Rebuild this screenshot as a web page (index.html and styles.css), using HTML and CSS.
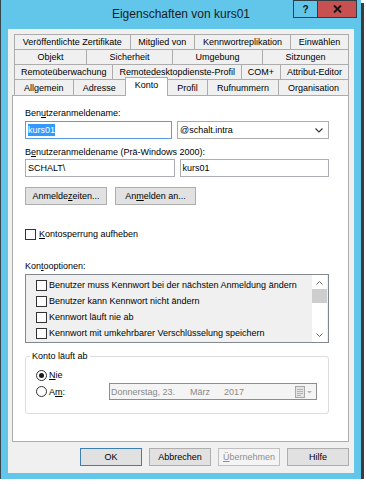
FILE: index.html
```html
<!DOCTYPE html>
<html>

<head>
    <meta charset="utf-8">
    <title>Eigenschaften von kurs01</title>
    <link rel="stylesheet" href="styles.css">
</head>

<body>
    <div class="window">
        <div class="titlebar">
            <div></div>
            <div class="title">Eigenschaften von kurs01</div>
            <div class="caption-buttons">
                <div class="cap-btn help">?</div>
                <div class="cap-btn close">
                    <svg width="9" height="8" viewBox="0 0 9 8">
                        <path d="M1 0.5 L8 7.5 M8 0.5 L1 7.5" stroke="#151515" stroke-width="1.9" fill="none"/>
                    </svg>
                </div>
            </div>
        </div>

        <div class="client">
            <!-- tab strip, four rows -->
            <div class="tabs">
                <div class="tab-row">
                    <div class="tab">Veröffentlichte Zertifikate</div>
                    <div class="tab">Mitglied von</div>
                    <div class="tab">Kennwortreplikation</div>
                    <div class="tab">Einwählen</div>
                </div>
                <div class="tab-row">
                    <div class="tab">Objekt</div>
                    <div class="tab">Sicherheit</div>
                    <div class="tab">Umgebung</div>
                    <div class="tab">Sitzungen</div>
                </div>
                <div class="tab-row">
                    <div class="tab">Remoteüberwachung</div>
                    <div class="tab">Remotedesktopdienste-Profil</div>
                    <div class="tab">COM+</div>
                    <div class="tab">Attribut-Editor</div>
                </div>
                <div class="tab-row last">
                    <div class="tab">Allgemein</div>
                    <div class="tab">Adresse</div>
                    <div class="tab active">Konto</div>
                    <div class="tab">Profil</div>
                    <div class="tab">Rufnummern</div>
                    <div class="tab">Organisation</div>
                </div>
            </div>

            <div class="panel">
                <div class="field-label">Ben<u>u</u>tzeranmeldename:</div>
                <div class="field-row">
                    <div class="textbox focused"><span class="selected-text">kurs01</span></div>
                    <div class="textbox combo">
                        <span>@schalt.intra</span>
                        <svg width="8" height="5" viewBox="0 0 8 5">
                            <path d="M0.5 0.5 L4 4 L7.5 0.5" stroke="#333" stroke-width="1.1" fill="none"/>
                        </svg>
                    </div>
                </div>

                <div class="field-label second">B<u>e</u>nutzeranmeldename (Prä-Windows 2000):</div>
                <div class="field-row tight">
                    <div class="textbox">SCHALT\</div>
                    <div class="textbox">kurs01</div>
                </div>

                <div class="action-buttons">
                    <div class="button wide">Anmelde<u>z</u>eiten...</div>
                    <div class="button">An<u>m</u>elden an...</div>
                </div>

                <div class="check-row unlock">
                    <span class="checkbox"></span>
                    <span><u>K</u>ontosperrung aufheben</span>
                </div>

                <div class="options-label">Kon<u>t</u>ooptionen:</div>
                <div class="listbox">
                    <div class="list-items">
                        <div class="list-item"><span class="checkbox"></span>Benutzer muss Kennwort bei der nächsten Anmeldung ändern</div>
                        <div class="list-item"><span class="checkbox"></span>Benutzer kann Kennwort nicht ändern</div>
                        <div class="list-item"><span class="checkbox"></span>Kennwort läuft nie ab</div>
                        <div class="list-item"><span class="checkbox"></span>Kennwort mit umkehrbarer Verschlüsselung speichern</div>
                    </div>
                    <div class="scrollbar">
                        <svg width="7" height="4" viewBox="0 0 7 4">
                            <path d="M0.5 3.5 L3.5 0.5 L6.5 3.5" stroke="#606060" stroke-width="1" fill="none"/>
                        </svg>
                        <div class="thumb"></div>
                        <div class="track"></div>
                        <svg width="7" height="4" viewBox="0 0 7 4">
                            <path d="M0.5 0.5 L3.5 3.5 L6.5 0.5" stroke="#606060" stroke-width="1" fill="none"/>
                        </svg>
                    </div>
                </div>

                <fieldset class="expires">
                    <legend>Konto läuft ab</legend>
                    <div class="radio-row">
                        <span class="radio checked"></span>
                        <span><u>N</u>ie</span>
                    </div>
                    <div class="radio-row date-row">
                        <span class="radio"></span>
                        <span>A<u>m</u>:</span>
                        <div class="datepicker">
                            <span class="date-day">Donnerstag, 23.</span><span class="date-month">März</span><span>2017</span>
                            <svg class="cal-icon" width="20" height="12" viewBox="0 0 20 12">
                                <rect x="1.5" y="0.5" width="9" height="11" fill="#e4e4e4" stroke="#a8a8a8"/>
                                <path d="M3 3.5 H9 M3 5.5 H9 M3 7.5 H9 M3 9.5 H7" stroke="#b4b4b4" stroke-width="1"/>
                                <path d="M13 5 L18 5 L15.5 7.5 Z" fill="#b4b4b4"/>
                            </svg>
                        </div>
                    </div>
                </fieldset>
            </div>

            <div class="dialog-buttons">
                <div class="button dialog default">OK</div>
                <div class="button dialog">Abbrechen</div>
                <div class="button dialog disabled"><u>Ü</u>bernehmen</div>
                <div class="button dialog">Hilfe</div>
            </div>
        </div>
    </div>
</body>
</html>
```

FILE: styles.css
```css
body {
    margin: 0;
    background: #fff;
    font-family: "Liberation Sans", Arial, sans-serif;
    font-size: 9px;
    color: #000;
}

u {
    text-underline-offset: 1px;
}

.window {
    width: 360px;
    height: 479px;
    background: #62c6ea;
    border-left: 1px solid #37474f;
    box-shadow: 3px 3px 0 #3c3c3c;
    display: flex;
    flex-direction: column;
}

/* title bar */
.titlebar {
    height: 29px;
    flex-shrink: 0;
    display: grid;
    grid-template-columns: 1fr auto 1fr;
}

.title {
    font-size: 12px;
    line-height: 29px;
    color: #1b1b1b;
}

.caption-buttons {
    justify-self: end;
    align-self: start;
    display: flex;
    margin-right: 4px;
}

.cap-btn {
    height: 18px;
    box-sizing: border-box;
    border: 1px solid #2e3d44;
    display: flex;
    align-items: center;
    justify-content: center;
}

.help {
    width: 25px;
    font-size: 10px;
    font-weight: bold;
    color: #151515;
}

.close {
    width: 39px;
    border-left: 0;
    background: #c75050;
}

/* client area */
.client {
    margin: 0 7px;
    height: 444px;
    box-sizing: border-box;
    padding: 5px 5px 7px 4px;
    background: #f0f0f0;
    display: flex;
    flex-direction: column;
}

.tabs {
    margin-left: 2px;
}

.tab-row {
    display: flex;
    height: 15px;
}

.tab-row.last {
    height: 16px;
}

.tab {
    flex: auto;
    box-sizing: border-box;
    border: 1px solid #acacac;
    border-bottom: 0;
    margin-left: -1px;
    background: #f0f0f0;
    display: flex;
    align-items: center;
    justify-content: center;
    white-space: nowrap;
}

.tab:first-child {
    margin-left: 0;
}

.tab.active {
    background: #fff;
    height: 19px;
    margin-top: -2px;
    align-self: flex-start;
    align-items: flex-start;
    padding-top: 2px;
    position: relative;
    z-index: 1;
}

.panel {
    flex: 1;
    border: 1px solid #acacac;
    background: #fff;
    padding-left: 12px;
}

.field-label {
    margin-top: 11px;
    line-height: 12px;
}

.field-label.second {
    margin-top: 7px;
}

.field-row {
    display: flex;
    gap: 5px;
    width: 304px;
    height: 18px;
    margin-top: 2px;
}

.field-row.tight {
    margin-top: 1px;
}

.textbox {
    flex: 1;
    box-sizing: border-box;
    border: 1px solid #abadb3;
    background: #fff;
    padding-left: 2px;
    line-height: 16px;
}

.textbox.focused {
    border-color: #569de5;
}

.selected-text {
    background: #3399ff;
    color: #fff;
    padding: 1px 0;
}

.combo {
    display: flex;
    align-items: center;
    justify-content: space-between;
    padding-right: 5px;
    border-color: #acacac;
}

.button {
    box-sizing: border-box;
    height: 18px;
    border: 1px solid #adadad;
    background: #e1e1e1;
    display: flex;
    align-items: center;
    justify-content: center;
}

.action-buttons {
    display: flex;
    gap: 8px;
    margin-top: 10px;
}

.action-buttons .button {
    width: 81px;
}

.action-buttons .button.wide {
    width: 82px;
}

.checkbox {
    width: 11px;
    height: 11px;
    box-sizing: border-box;
    border: 1px solid #333;
    background: #fff;
    flex-shrink: 0;
}

.check-row {
    display: flex;
    align-items: center;
    gap: 3px;
    height: 12px;
    margin-top: 23px;
}

.options-label {
    margin-top: 20px;
    line-height: 12px;
}

.listbox {
    width: 304px;
    height: 69px;
    box-sizing: border-box;
    margin-top: 2px;
    border: 1px solid #828790;
    background: #f0f0f0;
    display: flex;
}

.list-items {
    flex: 1;
    padding: 2px 0 0 10px;
}

.list-item {
    height: 16px;
    display: flex;
    align-items: center;
    gap: 2px;
    white-space: nowrap;
}

.scrollbar {
    width: 15px;
    background: #fff;
    display: flex;
    flex-direction: column;
    align-items: center;
    padding: 6px 0 5px;
    box-sizing: border-box;
    margin-right: 1px;
}

.thumb {
    width: 15px;
    height: 14px;
    margin-top: 4px;
    background: #cdcdcd;
}

.track {
    flex: 1;
}

/* account expiry group */
.expires {
    width: 304px;
    box-sizing: border-box;
    margin: 7px 0 0;
    padding: 0 11px 13px 10px;
    border: 1px solid #dcdcdc;
    border-radius: 3px;
}

.expires legend {
    line-height: 12px;
    padding: 0 2px;
    margin-left: -6px;
}

.radio-row {
    display: flex;
    align-items: center;
    gap: 2px;
    height: 12px;
    margin-top: 7px;
}

.radio {
    width: 11px;
    height: 11px;
    box-sizing: border-box;
    border: 1px solid #333;
    border-radius: 50%;
    background: #fff;
    display: flex;
    align-items: center;
    justify-content: center;
    flex-shrink: 0;
}

.radio.checked::after {
    content: "";
    width: 5px;
    height: 5px;
    border-radius: 50%;
    background: #1a1a1a;
}

.date-row {
    height: 17px;
    margin-top: 2px;
}

.datepicker {
    margin-left: auto;
    width: 208px;
    height: 17px;
    box-sizing: border-box;
    border: 1px solid #8d8d8d;
    background: #f4f4f4;
    color: #8a8a8a;
    display: flex;
    align-items: center;
    padding-left: 1px;
}

.date-day {
    width: 79px;
}

.date-month {
    width: 34px;
}

.cal-icon {
    margin-left: auto;
    margin-right: 2px;
}

/* OK / Abbrechen row */
.dialog-buttons {
    display: flex;
    justify-content: flex-end;
    gap: 7px;
    margin-top: 6px;
}

.button.dialog {
    width: 62px;
}

.button.default {
    border-color: #3c7fb1;
}

.button.disabled {
    background: #f4f4f4;
    border-color: #bfbfbf;
    color: #8f8f8f;
}
```
